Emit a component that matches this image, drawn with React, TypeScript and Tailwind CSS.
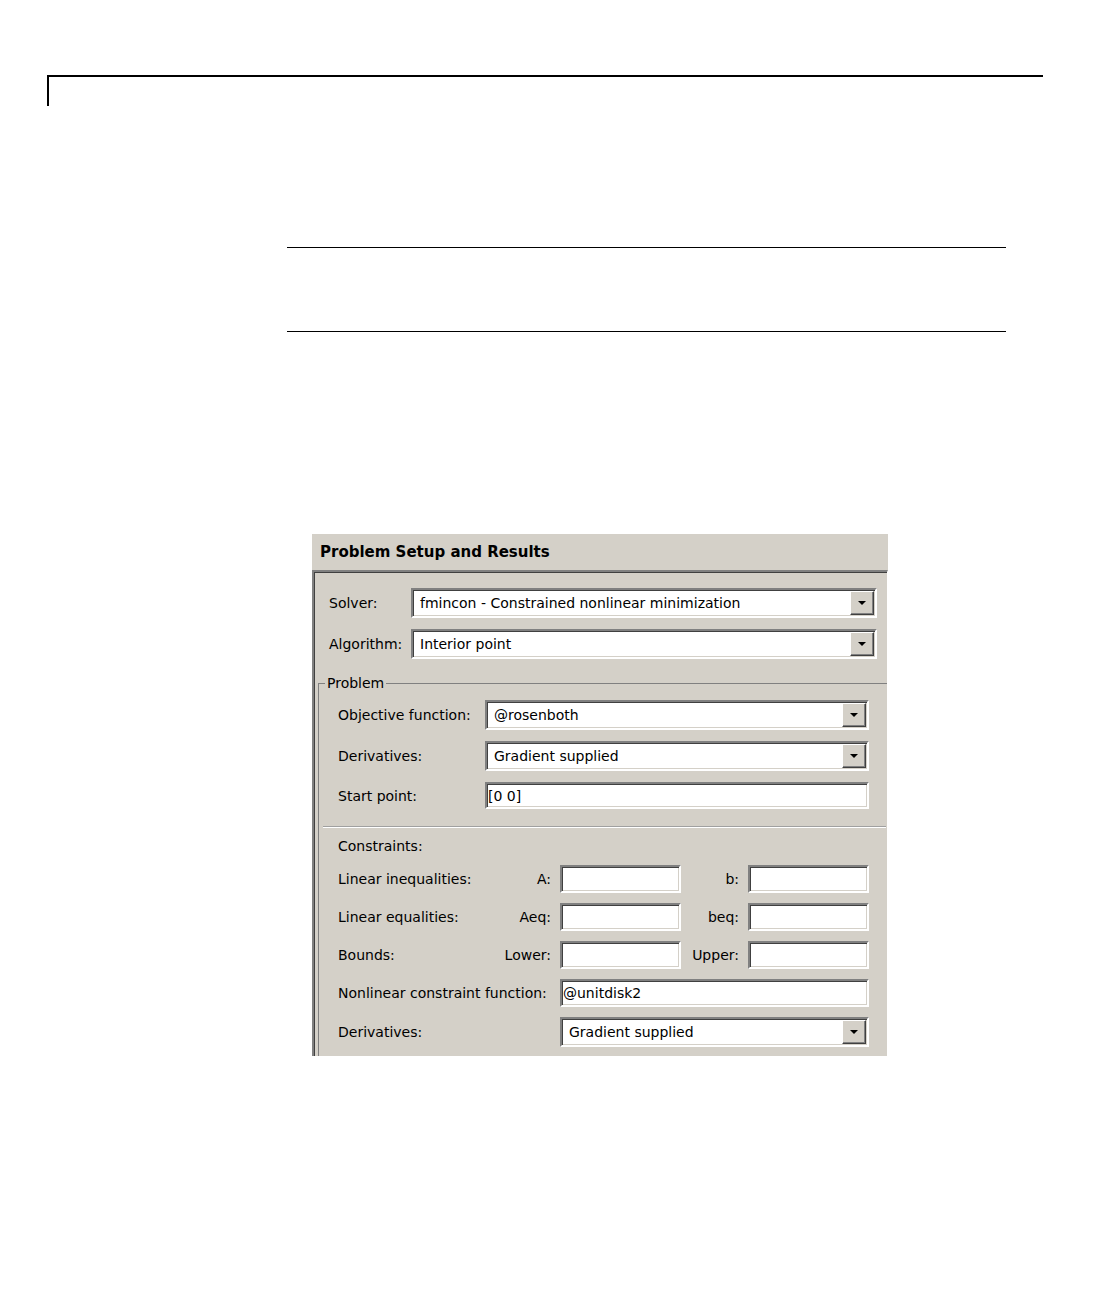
import React from 'react';

const sunken =
  'border-2 border-t-[#808080] border-l-[#808080] border-b-white border-r-white shadow-[inset_1px_1px_0_#404040,inset_-1px_-1px_0_#d4d0c8] bg-white';

// Windows classic combo box
const Combo: React.FC<{ value: string; className?: string }> = ({ value, className = '' }) => (
  <div className={`h-[30px] flex items-center pl-[7px] pr-[1px] ${sunken} ${className}`}>
    <span className="flex-1 whitespace-nowrap">{value}</span>
    <div className="w-[24px] h-[24px] flex items-center justify-center bg-[#d4d0c8] border border-t-white border-l-white border-r-[#404040] border-b-[#404040] shadow-[inset_-1px_-1px_0_#808080]">
      <svg width="8" height="4" viewBox="0 0 8 4">
        <polygon points="0,0 8,0 4,4" fill="#000" />
      </svg>
    </div>
  </div>
);

const Field: React.FC<{ value?: string; className?: string; h?: string }> = ({ value = '', className = '', h = 'h-[28px]' }) => (
  <div className={`${h} flex items-center pl-[1px] ${sunken} ${className}`}>
    <span className="whitespace-nowrap">{value}</span>
  </div>
);

const ConstraintRow: React.FC<{ label: string; a: string; b: string }> = ({ label, a, b }) => (
  <div className="flex items-center mt-[10px] first:mt-0">
    <div className="w-[222px] flex justify-between pr-[9px]">
      <span>{label}</span>
      <span>{a}</span>
    </div>
    <Field className="w-[121px]" />
    <div className="w-[67px] text-right pr-[9px]">{b}</div>
    <Field className="w-[121px]" />
  </div>
);

export default function App() {
  return (
    <div className="min-h-[1297px] bg-white pt-[75px] font-['DejaVu_Sans',sans-serif] text-black">
      {/* page frame */}
      <div className="ml-[47px] w-[996px] h-[31px] border-t-2 border-l-2 border-black" />

      {/* rules */}
      <div className="ml-[287px] w-[719px] h-px bg-black mt-[141px]" />
      <div className="ml-[287px] w-[719px] h-px bg-black mt-[83px]" />

      {/* dialog panel */}
      <div className="ml-[312px] mt-[202px] w-[576px] h-[522px] bg-[#d4d0c8] overflow-hidden flex flex-col text-[14px] leading-[16px]">
        <div className="h-[36px] shrink-0 flex items-center pl-[8px] font-bold text-[15px]">
          Problem Setup and Results
        </div>
        <div className="flex-1 border-t-2 border-l-2 border-t-[#808080] border-l-[#808080] border-r border-r-white shadow-[inset_1px_1px_0_#404040] pt-[16px] pl-[15px] pr-[10px]">
          <div className="flex items-center">
            <span className="w-[82px]">Solver:</span>
            <Combo value="fmincon - Constrained nonlinear minimization" className="flex-1" />
          </div>
          <div className="flex items-center mt-[11px]">
            <span className="w-[82px]">Algorithm:</span>
            <Combo value="Interior point" className="flex-1" />
          </div>

          <fieldset className="mt-[16px] -ml-[11px] -mr-[10px] border-0 border-t border-l border-[#808080] pl-[19px] pr-[18px] pb-[20px]">
            <legend className="-ml-[13px] px-[2px] leading-[16px]">Problem</legend>
            <div className="pt-[9px]">
              <div className="flex items-center">
                <span className="w-[147px]">Objective function:</span>
                <Combo value="@rosenboth" className="flex-1" />
              </div>
              <div className="flex items-center mt-[11px]">
                <span className="w-[147px]">Derivatives:</span>
                <Combo value="Gradient supplied" className="flex-1" />
              </div>
              <div className="flex items-center mt-[11px]">
                <span className="w-[147px]">Start point:</span>
                <Field value="[0 0]" h="h-[27px]" className="flex-1" />
              </div>

              <div className="mt-[17px] -ml-[15px] -mr-[17px] h-[2px] border-t border-b border-t-[#a0a0a0] border-b-white" />

              <div className="mt-[10px]">Constraints:</div>

              <div className="mt-[11px]">
                <ConstraintRow label="Linear inequalities:" a="A:" b="b:" />
                <ConstraintRow label="Linear equalities:" a="Aeq:" b="beq:" />
                <ConstraintRow label="Bounds:" a="Lower:" b="Upper:" />
                <div className="flex items-center mt-[10px]">
                  <div className="w-[222px] whitespace-nowrap">Nonlinear constraint function:</div>
                  <Field value="@unitdisk2" className="w-[309px]" />
                </div>
                <div className="flex items-center mt-[10px]">
                  <div className="w-[222px] pr-[9px]">Derivatives:</div>
                  <Combo value="Gradient supplied" className="w-[309px]" />
                </div>
              </div>
            </div>
          </fieldset>
        </div>
      </div>
    </div>
  );
}
